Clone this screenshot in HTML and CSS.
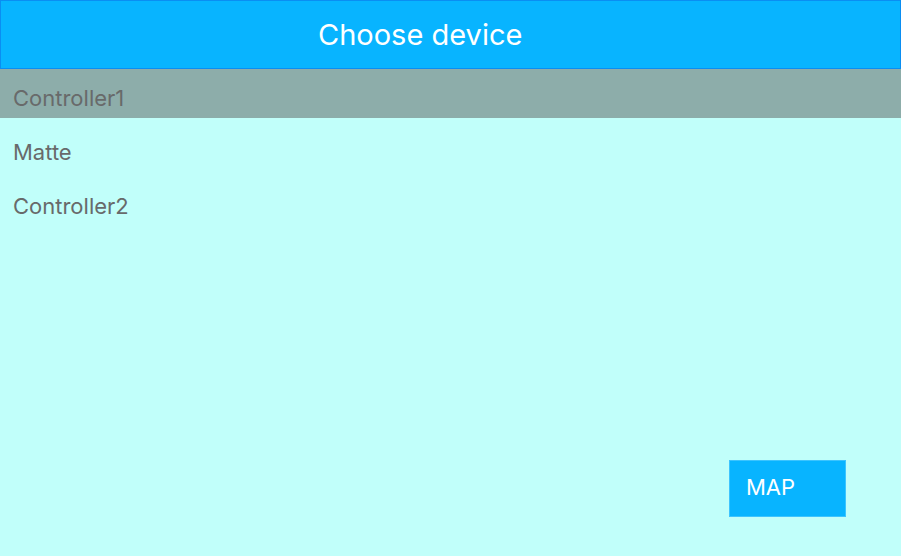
FILE: index.html
```html
<!DOCTYPE html>
<html>
<head>
<meta charset="utf-8">
<link rel="stylesheet" href="styles.css">
</head>
<body>
<div class="app">
  <header class="header"><h1 class="title">Choose device</h1></header>
  <ul class="list">
    <li class="item selected">Controller1</li>
    <li class="item">Matte</li>
    <li class="item">Controller2</li>
  </ul>
  <div class="footer"><button class="map-btn">MAP</button></div>
</div>
</body>
</html>
```
FILE: styles.css
```css
html, body { margin: 0; padding: 0; }
body {
  width: 901px; height: 556px; overflow: hidden;
  background: #c1fffa;
  font-family: Inter, "Noto Sans", sans-serif;
}
.app { display: flex; flex-direction: column; height: 556px; }
.header {
  box-sizing: border-box;
  height: 69px;
  background: #08b4ff;
  border: 1px solid #0a8ef2;
  display: flex; align-items: center;
  padding-left: 317px;
}
.title {
  margin: 0; font-size: 29px; font-weight: 400; color: #fff;
}
.list { list-style: none; margin: 0; padding: 0; }
.item {
  box-sizing: border-box;
  height: 49px; margin-bottom: 5px;
  padding: 17px 0 0 13px;
  font-size: 22px; line-height: 24px;
  color: #686a6a;
}
.item.selected { background: #8dadaa; }
.footer { flex: 1; display: flex; justify-content: flex-end; align-items: flex-end; padding: 0 55px 39px 0; }
.map-btn {
  box-sizing: border-box;
  width: 117px; height: 57px;
  background: #08b4ff;
  border: 1px solid #3cc4ff;
  color: #fff;
  font-family: Inter, "Noto Sans", sans-serif;
  font-size: 22px;
  text-align: left;
  padding: 0 0 4px 16px;
}
```
